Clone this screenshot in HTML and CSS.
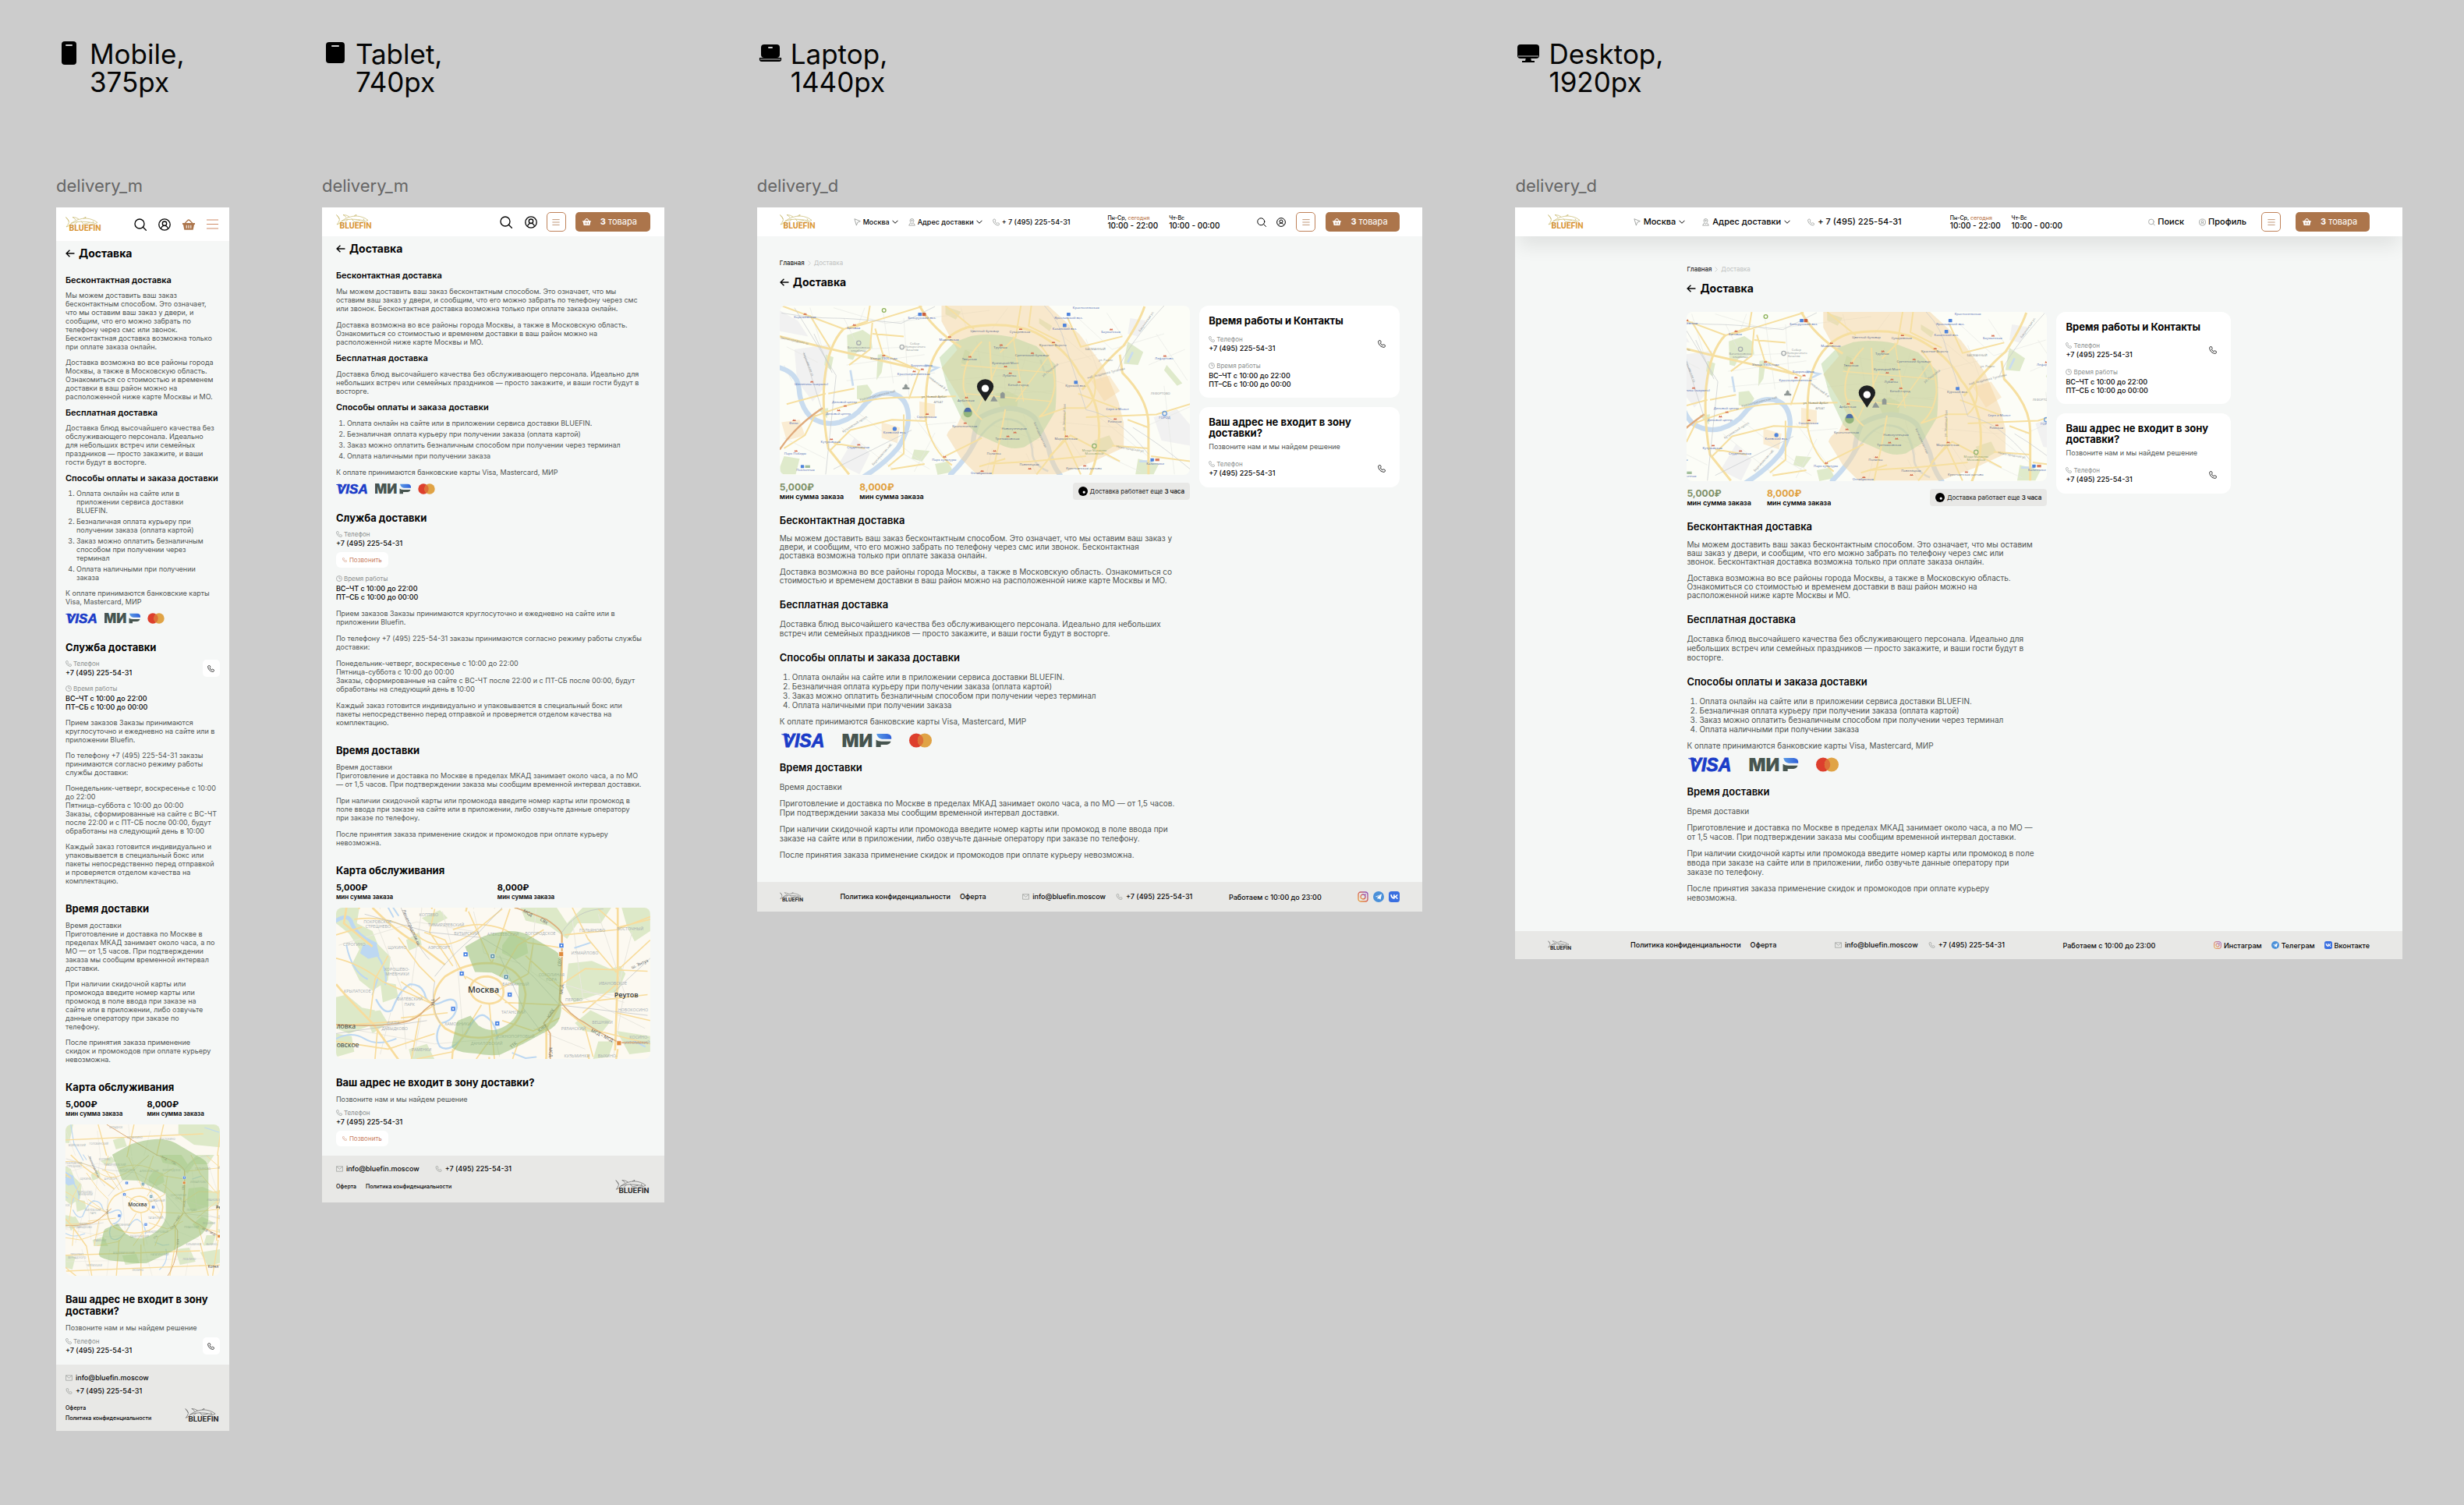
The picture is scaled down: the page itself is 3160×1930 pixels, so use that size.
FILE: index.html
```html
<!DOCTYPE html>
<html lang="ru">
<head>
<meta charset="utf-8">
<title>Bluefin — Доставка</title>
<meta name="viewport" content="width=device-width, initial-scale=1">
<link rel="stylesheet" href="styles.css">
</head>
<body>

<svg class="sprite" width="0" height="0" aria-hidden="true">
  <defs>
    <linearGradient id="gold" x1="0" y1="0" x2="1" y2="1">
      <stop offset="0" stop-color="#c98a2e"/><stop offset=".5" stop-color="#d8912f"/><stop offset="1" stop-color="#e0a640"/>
    </linearGradient>
    <linearGradient id="mir-blue" x1="0" x2="1"><stop offset="0" stop-color="#5a9ae6"/><stop offset="1" stop-color="#2f5fd8"/></linearGradient>
    <linearGradient id="insta" x1="0" y1="1" x2="1" y2="0"><stop offset="0" stop-color="#e9a23b"/><stop offset=".5" stop-color="#d9604f"/><stop offset="1" stop-color="#8a4fc4"/></linearGradient>

  <symbol id="i-search" viewBox="0 0 24 24"><g fill="none" stroke="currentColor" stroke-width="2" stroke-linecap="round"><circle cx="10.500" cy="10.500" r="9"/><path d="M17 17l6 6"/></g></symbol>
  <symbol id="i-user" viewBox="0 0 24 24"><g fill="none" stroke="currentColor" stroke-width="2"><circle cx="12" cy="12" r="10.800"/><circle cx="12" cy="10" r="4"/><path d="M5.500 19c1-3 3.500-5 6.500-5s5.500 2 6.500 5"/></g></symbol>
  <symbol id="i-basket" viewBox="0 0 24 20"><path fill="currentColor" d="M0 7h4l6-6.500q2-1 4 0L20 7h4v3h-1.500l-2 10h-17l-2-10H0zM6.500 7h11L13 2.500q-1-.6-2 0zM7 11v6h1.600v-6zM11.200 11v6h1.600v-6zM15.400 11v6H17v-6z" fill-rule="evenodd"/></symbol>
  <symbol id="i-menu" viewBox="0 0 15 13"><path d="M0 1h15M0 6.500h15M0 12h15" stroke="currentColor" fill="none" stroke-width="1.200"/></symbol>
  <symbol id="i-phone" viewBox="0 0 24 24"><path fill="none" stroke="currentColor" stroke-width="2" stroke-linejoin="round" d="M3 2.500l3.500-1.300q1-.3 1.500.7l2 4q.4 1-.3 1.800L8 9.500c1 3 3.500 5.500 6.500 6.500l1.800-1.700q.8-.7 1.800-.3l4 2q1 .5.7 1.500L21.500 21q-.7 1.500-2.500 1.500C9 21.500 2.500 15 1.500 5q0-1.800 1.500-2.500z"/></symbol>
  <symbol id="i-clock" viewBox="0 0 24 24"><g fill="none" stroke="currentColor" stroke-width="2"><circle cx="12" cy="12" r="10.500"/><path d="M12 5v7h6"/></g></symbol>
  <symbol id="i-back" viewBox="0 0 22 18"><path d="M21 9H2M10 1L2 9l8 8" fill="none" stroke="currentColor" stroke-width="2.600"/></symbol>
  <symbol id="i-chev" viewBox="0 0 16 10"><path d="M1 1.500l7 7 7-7" fill="none" stroke="currentColor" stroke-width="2"/></symbol>
  <symbol id="i-chev-r" viewBox="0 0 8 14"><path d="M1 1l6 6-6 6" fill="none" stroke="currentColor" stroke-width="1.500"/></symbol>
  <symbol id="i-nav" viewBox="0 0 20 22"><path d="M2 1.500l16.500 6.500-8 3.500L7.500 20z" fill="none" stroke="currentColor" stroke-width="1.800" stroke-linejoin="round"/></symbol>
  <symbol id="i-pin" viewBox="0 0 22 24"><g fill="none" stroke="currentColor" stroke-width="1.800"><path d="M11 18S5 11.500 5 7a6 6 0 0 1 12 0c0 4.500-6 11-6 11z"/><circle cx="11" cy="7" r="2"/><path d="M6 14.500L1.500 22h19L16 14.500"/></g></symbol>
  <symbol id="i-mail" viewBox="0 0 24 20"><path d="M1.500 1.500h21v17h-21zM2 2l10 9 10-9" fill="none" stroke="currentColor" stroke-width="1.700"/></symbol>
  <symbol id="i-insta" viewBox="0 0 28 28"><g fill="none" stroke="url(#insta)" stroke-width="2.600"><rect x="2" y="2" width="24" height="24" rx="6"/><circle cx="14" cy="14" r="6"/></g><circle cx="20.500" cy="7.500" r="1.600" fill="#a05ab0"/></symbol>
  <symbol id="i-tg" viewBox="0 0 28 28"><circle cx="14" cy="14" r="14" fill="#4a90d9"/><path d="M5 14l17-7-3 14.500-5-3.500-2.500 2.500-.5-5 8-7-10 6z" fill="#fff"/></symbol>
  <symbol id="i-vk" viewBox="0 0 28 28"><rect width="28" height="28" rx="7" fill="#3a6fe0"/><path d="M4.500 8.500h3.600c.2 4.500 2.200 6.600 4 7V8.500h3.400v4c2-.2 3.800-2 4.500-4h3.300c-.6 2.700-2.400 4.600-3.800 5.500 1.400.8 3.500 2.500 4.300 5.500h-3.600c-.8-2.300-2.600-3.500-4.700-3.800v3.800h-.5C8.500 19.500 4.700 15.500 4.500 8.500z" fill="#fff"/></symbol>

  <symbol id="d-mobile" viewBox="0 0 34 34"><rect x="7" y="2" width="19" height="30" rx="4"/><rect x="12" y="6" width="9" height="2" rx="1" fill="#ccc"/></symbol>
  <symbol id="d-tablet" viewBox="0 0 34 34"><rect x="5" y="3" width="24" height="27" rx="4"/><rect x="12" y="7" width="10" height="2" rx="1" fill="#ccc"/></symbol>
  <symbol id="d-laptop" viewBox="0 0 34 34"><rect x="5" y="6" width="24" height="17" rx="4"/><rect x="14" y="9" width="6" height="2" rx="1" fill="#ccc"/><path d="M3 23q-1 5 3 5h22q4 0 3-5z"/><path d="M4 25h26" stroke="#ccc" stroke-width="1"/></symbol>
  <symbol id="d-desktop" viewBox="0 0 34 34"><rect x="3" y="6" width="28" height="18" rx="4"/><path d="M14 23h6l1 4h4v2H9v-2h4z"/><path d="M4 21h26" stroke="#ccc" stroke-width="1"/></symbol>

  <symbol id="fish" viewBox="0 0 94 38">
    <g fill="none" stroke="currentColor" stroke-width="1.300">
      <path d="M1 1q7 5 8 13Q6 22 2 26q7-1 12-9Q32 4 52 4q18 1 30 11-8 5-20 5"/>
      <path d="M9 12L1 1M26 8q-4-6-8-7 9 0 16 5M46 4l6-4-1 4M14 17q20-9 60-1"/>
      <path d="M30 13l-8 8M40 11l6 8 16-4M70 11l2 4"/>
    </g>
  </symbol>

  <symbol id="pay-visa" viewBox="0 0 41 14"><path d="M0 1h7l2 5Q5 2.500 0 1.500z" fill="#1a3cc8"/><text x="1" y="13.300" font-family="Liberation Sans, sans-serif" font-weight="700" font-style="italic" font-size="17" fill="#1a3cc8" stroke="#1a3cc8" stroke-width=".6">VISA</text></symbol>
  <symbol id="pay-mir" viewBox="0 0 46 14"><text x="-1" y="13.300" font-family="Inter, sans-serif" font-weight="900" font-size="17" fill="#46544f">МИ</text><path d="M32 .8h10q4.500.4 4 5H37q-4-.6-5-5z" fill="url(#mir-blue)"/><path d="M31.500 6.500q2 1.500 5 1.500h9q-1 3-4 3h-5.500v2.300h-4.500z" fill="#46544f"/></symbol>
  <symbol id="pay-mc" viewBox="0 0 22 14"><circle cx="7" cy="7" r="6.700" fill="#dd3f2d"/><circle cx="15" cy="7" r="6.700" fill="#e0a345"/><path d="M11 1.600a6.700 6.700 0 0 1 0 10.800 6.700 6.700 0 0 1 0-10.800z" fill="#dd7038"/></symbol>

  <!-- Central Moscow with the two price zones -->
  <symbol id="moscow" viewBox="3 12 1578 650" preserveAspectRatio="xMidYMid slice">
    <rect x="3" y="12" width="1578" height="650" fill="#fcfdf7"/>
    <g fill="#f1f1f1"><path d="M60 180l140-20-20 160-50 60-60-80zM3 30l70 40 40 60-110-20zM230 620l60-100 60 60-40 80zM1440 440l90-30 50 60v80l-110-20zM1350 60l60 10-30 60-40-10z"/></g>
    <g fill="#faecd2"><path d="M10 460l70-10 20 60-70 20zM395 460l70 20-10 60-60-20zM540 380l60 10v50l-60 10zM1200 300l70-20 40 60-60 40z"/></g>
    <g fill="#dfeacb"><path d="M262 125l60-20 30 20 8 50-60 15-15 30-20-5zM300 320l40-5 20 30-20 35-40-10zM380 200l25-2-10 70-20 30zM20 590l60 10-15 60H5v-30zM1340 150l60 40-20 50-55-5zM1210 530l60-20 20 40-50 30zM520 565l60 5-30 40-40-10zM700 230l15-50 20 10-20 50zM830 350l50-10 40 20-5 45-60 5zM600 620l50-10 20 40-60 12zM1380 600l80 20-20 40h-70zM180 200l30 10-10 50-25-20zM150 410l40-5-5 40zM1490 240l60 70-20 10-50-60zM640 15l60 20-20 30-40-20zM1000 60l50 30-10 20-40-30z"/></g>
    <g stroke="#e7e8e4" stroke-width="2" fill="none">
      <path d="M210 20l200 60 400-50M250 60l60 120 200-10M400 30l40 280M480 60l20 300M560 200l-300 40M260 300l340-30M300 420l260 200M520 440l140 180M560 470l120-10M20 520l160 80M240 480l200 160M120 20l60 200M30 170l120 60M600 500l-80 150M1150 60l130 120 200-60M1180 140l60 160M1260 40l60 90M1230 440l200 160M1420 240l140-60M1450 120l120 180M1400 480l180-80M1260 590l130 60M1480 320l40 340M330 20l-30 80M700 20l20 80M880 20l-60 80M1100 500l100 150M950 580l40 80M820 560l-20 90M640 300l220-20M1060 240l160-40M1080 460l220 20M20 240l30 60M440 560l140 80"/>
      <path d="M720 180l320 60M700 250l340 20M720 310l330 40M760 150l40 220M860 150l10 200M960 170l-60 200M700 360l350-20M820 470l180 60M880 440v110M940 430l40 130M1060 300l100 30M1080 120l120 100"/>
    </g>
    <g fill="none" stroke="#c9dcef" stroke-width="19" stroke-linecap="round">
      <path d="M3 250q70 20 75 85 5 65 45 105 50 35 110 20 60-20 90-60 40-50 90-52 80 0 85 90 0 60-40 120-50 60-130 110"/>
      <path d="M660 660q60-60 85-110 5-70 30-110 50-30 110-34 70 5 100 40 35 70 50 110 15 70 45 105"/>
    </g>
    <path d="M745 560q50-90 110-112 60-5 90 30 30 60 30 110 10 40 60 60M275 260l10 60M560 240l50 10-40 20M1385 610l50 0M1005 220l20 60M1360 190l-20 40" fill="none" stroke="#c9dcef" stroke-width="8"/>
    <path d="M625 12h410l120 110 90 120 60 140 20 80 0 95-120 55-130 48H760l-60-60-55-90q10-30 40-38l30-70-90-150 60-70-60-110z" fill="#f3d3a2" fill-opacity=".5"/>
    <path d="M740 128q70-12 160 5l90 35 72 70q8 90 0 180l-60 100-60 38q-50 12-90-10l-90-40-60-60-52-110-33-125 60-60z" fill="#b5d49c" fill-opacity=".48"/>
    <g fill="none" stroke="#f6dfa0" stroke-linejoin="round">
      <g stroke-width="9"><path d="M250 100q-60 60-75 200-10 130 15 260l80 100M565 455q-5-150 20-220 40-110 140-140 160-25 260 20 120 60 170 160 45 50 70 150 20 130-30 240M540 12q50 90 160 160M1165 335q100-120 160-170 60-90 80-150M1310 200l10 70q100 100 100 200v190M3 130l180 45 330 75"/></g>
      <g stroke-width="6"><path d="M130 440q200-80 350-75l200-5M350 12l-10 60-90 30-240-90M565 455l-130-5-160 40-80 80M565 455q20 110 100 170M640 590l140-70M270 100l100-30 180-55M360 70l-10 110-80 60M640 12l110 90M780 150q-80 80-70 180 20 80 70 120M810 150l10 200M930 12l-20 120-60 60M1080 150l-120-60 10-78M1000 160q60 60 60 160-10 80-60 120M1000 440l100-35h80q50-40 30-120M1180 440l270-10 130-40M1100 420v110l60 130M1040 590l80-80 190 100M1100 520l-110 140M800 620l170-10 210-20M870 410l-20 110-30 140M770 630l100-30M430 640l130-20M480 130l-120-10M1110 60l50 110 160-40M1150 350l160 60M500 370l40-110-140-60M400 200l-30-100M210 540l120 20M20 560l80-50 40-80M180 350l-150 40M290 330l-100 20M200 180l-80-130M1430 590l150 20M1340 450l80 30M1420 560l-140-10M480 430v150l-60 50"/></g>
      <path d="M700 240l350 30M720 350l330 30M760 420l80-180M900 130l40 250M1040 200l-130 180" stroke-width="4"/>
    </g>
    <path d="M3 565q60-90 165-160" fill="none" stroke="#e0ab7c" stroke-width="7"/>
    <g fill="none" stroke="#c5c9cb" stroke-width="2"><path d="M10 40q120 20 200 20t260 20l130-65M95 190l70 220M205 270l-70-150M1020 12q60 60 80 150 40 120 80 250 120 20 240 170M210 640l300-150M1360 480q100 60 220 160M1480 12q-140 150-180 250M60 20l160 260-40 380"/></g>
    <g font-family="Open Sans, sans-serif" font-size="13" fill="#4a67b3" text-anchor="middle">
      <text x="100" y="59">Хорошёвская</text><text x="287" y="101">Беговая</text><text x="550" y="64">Белорусский вкз.</text><text x="654" y="147">Маяковская</text><text x="403" y="218">Улица 1905 года</text><text x="549" y="245">Баррикадная</text><text x="518" y="278">Краснопресненская</text><text x="125" y="318">Шелепиха (закрыто)</text><text x="252" y="386">Деловой центр</text><text x="228" y="430">Деловой центр</text><text x="57" y="466">Фили</text><text x="445" y="502">Киевский вкз.</text><text x="199" y="540">Кутузовская</text><text x="305" y="559">Студенческая</text><text x="63" y="585">Парк Победы</text><text x="102" y="648">Поклонная</text><text x="568" y="443">Смоленская</text><text x="635" y="607">Парк культуры</text><text x="778" y="659">Октябрьская</text><text x="1180" y="24">Красносельская</text><text x="1113" y="62">Ярославский вкз.</text><text x="1098" y="105">Казанский вкз.</text><text x="1275" y="117">Бауманская</text><text x="1480" y="219">Лефортово</text><text x="1301" y="412">Серп и Молот</text><text x="1446" y="622">Калитники</text><text x="1482" y="445">ГОРОД</text>
    </g>
    <g font-family="Open Sans, sans-serif" font-size="13" fill="#586a8c" text-anchor="middle">
      <text x="791" y="115">Цветной бульвар</text><text x="926" y="117">Сухаревская</text><text x="851" y="178">Трубная</text><text x="1053" y="167">Красные Ворота</text><text x="972" y="208">Сретенский бульвар</text><text x="732" y="222">Тверская</text><text x="870" y="236">Кузнецкий Мост</text><text x="886" y="286">Лубянка</text><text x="920" y="321">Китай-город</text><text x="1140" y="325">Курский вкз.</text><text x="719" y="380">Арбатская</text><text x="714" y="478">Кропоткинская</text><text x="904" y="488">Новокузнецкая</text><text x="878" y="528">Третьяковская</text><text x="1103" y="528">Марксистская</text><text x="826" y="585">Полянка</text><text x="962" y="627">Павелецкая</text><text x="1172" y="641">Крестьянская застава</text><text x="1290" y="462">Римская</text>
    </g>
    <g font-family="Open Sans, sans-serif" font-size="12" fill="#8c9296" text-anchor="middle">
      <text x="307" y="177">Ваганьковское</text><text x="307" y="190">кладбище</text><text x="522" y="161">Собор</text><text x="524" y="174">Непорочного</text><text x="512" y="187">Зачатия</text><text x="613" y="386">АРБАТ</text><text x="1216" y="182">БАСМАННЫЙ</text><text x="1466" y="353">ЛЕФОРТОВО</text><text x="596" y="365" fill="#6a7276">ул. Новый Арбат</text><text x="1256" y="224">ул. Радио</text><text x="1212" y="572" fill="#87a06a">Мощи Матроны</text><text x="1212" y="585" fill="#87a06a">Московской</text>
      <text x="382" y="360" transform="rotate(-14 382 360)">Краснопресненская наб.</text><text x="295" y="470" transform="rotate(-32 295 470)">Кутузовский просп.</text><text x="400" y="585" transform="rotate(-48 400 585)">Бережковская наб.</text><text x="110" y="240" transform="rotate(68 110 240)">Хорошёвское ш.</text><text x="60" y="150" transform="rotate(12 60 150)">Звенигородское ш.</text><text x="1258" y="275" transform="rotate(-14 1258 275)">наб. Академика Туполева</text><text x="1350" y="566" transform="rotate(10 1350 566)">Нижегородская ул.</text><text x="1415" y="75" transform="rotate(-55 1415 75)">Бакунинская ул.</text><text x="1000" y="510" transform="rotate(66 1000 510)">Космодамианская</text><text x="1100" y="440" transform="rotate(-88 1100 440)">ул. Земляной Вал</text><text x="610" y="315" transform="rotate(36 610 315)">Новинский б-р</text><text x="1045" y="262" transform="rotate(-38 1045 262)">ул. Покровка</text>
    </g>
    <g fill="#d4694a"><path d="M94 47l4-7 3 4 3-4 4 7zM283 89l4-7 3 4 3-4 4 7zM649 135l4-7 3 4 3-4 4 7zM396 207l4-7 3 4 3-4 4 7zM544 259l4-7 3 4 3-4 4 7zM513 267l4-7 3 4 3-4 4 7zM120 307l4-7 3 4 3-4 4 7zM248 400l4-7 3 4 3-4 4 7zM223 417l4-7 3 4 3-4 4 7zM52 455l4-7 3 4 3-4 4 7zM195 528l4-7 3 4 3-4 4 7zM300 549l4-7 3 4 3-4 4 7zM59 573l4-7 3 4 3-4 4 7zM563 431l4-7 3 4 3-4 4 7zM630 595l4-7 3 4 3-4 4 7zM774 650l4-7 3 4 3-4 4 7zM922 105l4-7 3 4 3-4 4 7zM847 166l4-7 3 4 3-4 4 7zM1048 156l4-7 3 4 3-4 4 7zM967 197l4-7 3 4 3-4 4 7zM727 211l4-7 3 4 3-4 4 7zM864 249l4-7 3 4 3-4 4 7zM882 274l4-7 3 4 3-4 4 7zM916 308l4-7 3 4 3-4 4 7zM714 368l4-7 3 4 3-4 4 7zM709 466l4-7 3 4 3-4 4 7zM900 502l4-7 3 4 3-4 4 7zM873 517l4-7 3 4 3-4 4 7zM1098 516l4-7 3 4 3-4 4 7zM822 573l4-7 3 4 3-4 4 7zM957 641l4-7 3 4 3-4 4 7zM1168 630l4-7 3 4 3-4 4 7zM1285 450l4-7 3 4 3-4 4 7zM1270 106l4-7 3 4 3-4 4 7zM1476 208l4-7 3 4 3-4 4 7z"/></g>
    <g fill="#4f84dc"><rect x="535" y="39" width="14" height="13" rx="2"/><rect x="1106" y="39" width="14" height="13" rx="2"/><rect x="1091" y="81" width="14" height="13" rx="2"/><rect x="1134" y="300" width="14" height="13" rx="2"/><rect x="84" y="624" width="13" height="12" rx="2"/><rect x="1428" y="598" width="13" height="12" rx="2"/><circle cx="445" cy="485" r="8"/></g>
    <rect x="551" y="39" width="14" height="13" rx="2" fill="#c9603f"/><rect x="1446" y="599" width="16" height="10" fill="#d77a5c"/><rect x="101" y="625" width="19" height="10" fill="#a3bf9c"/>
    <g fill="none" stroke-width="4"><circle cx="404" cy="30" r="7" stroke="#8fb35b"/><circle cx="307" cy="155" r="8" stroke="#a8adaf"/><circle cx="473" cy="171" r="8" stroke="#a8adaf"/><circle cx="1482" cy="426" r="8" stroke="#6fa0dc"/><circle cx="1212" cy="551" r="8" stroke="#93b573"/></g>
    <circle cx="726" cy="424" r="17" fill="#93b57c"/><path d="M712 420q2-16 14-16t14 16z" fill="#4c6ca6"/>
    <path d="M475 333h27v-6l-8-3v-6l-6-6-6 6v6l-7 3zM813 380h28l-9-14-6-8-6 8zM851 368h17v-18l-8-7-9 7z" fill="#8f9794"/>
    <path d="M793 380l-22-34q-10-12-10-24a32 28 0 0 1 64 0q0 12-10 24z" fill="#1e2022"/><circle cx="793" cy="330" r="14" fill="#fff"/>
  </symbol>

  <!-- City-wide base map -->
  <g id="city">
    <rect x="0" y="-60" width="1400" height="1060" fill="#fcf9f1"/>
    <g fill="#dde9c8">
      <path d="M90 155l90 0-10 60 60 30 20 50 50 50-10 90-60 40-50-40-30-60 30-60-40-60-50-40zM90 500l40-10 60 50 50 10-20 60-80 30-50-20zM260 440l60 10 10 50-60 20zM985 370l90-10 70 30 40-10 20 30-30 70-80 10-90 30-30-60zM800 155l140 0 40 60 60-60h110l-40 60-90 0-40 60-70-50-90-20zM1190 155h110v90l-60 40-30-60zM1010 600l60-50 80 40-40 50-70-10zM360 280l50-30 10 50-50 20zM420 195l70-30 30 30-60 30zM730 300l30-40 60 10 10 60-50 25-50-25zM90 640l60 10 10 60-70 20zM200 560l60-10 30 50-60 40zM1170 630l130 20v60l-80 10zM370 700l70-20 30 60h-90zM1100 670l60 0-20 60-60 8zM920 -60h300l60 80-60 90-200-20-100-70zM160 -60h90l-30 140-80-10zM500 60l70-20 20 60-70 20zM900 760l90-10 40 90-100 20zM1060 780l130-20 20 80-100 30zM560 800l90-10 20 60-90 10zM180 790l80 20-20 80-70-20z"/>
    </g>
    <g fill="none" stroke="#e9e7df" stroke-width="3">
      <path d="M100 300l300-90 240 40M240 200l100 260 20 240M420 160l-40 300M500 170l60 230 20 260M620 170l40 160 140 40M860 160l-20 240 120 80M1000 200l40 300 240 120M1100 180l100 300-40 240M1230 250l-60 240M900 430l300 90M130 620l340 60 230-20M300 560l-40 160M420 560l-30 170M850 620l200 80M1040 480l200 20M700 640l20 90M200 0l60 160M400 0l20 160M600-40l20 200M740 0l-40 160M300 760l60 200M480 760l-20 180M700 740l60 220M1000 740l-40 220M200 840l900-20M260 60l700-40"/>
    </g>
    <g fill="none" stroke="#bdd8f2" stroke-linecap="round" stroke-linejoin="round">
      <path d="M90 205q50-30 60 10 20 50 90 80" stroke-width="15"/>
      <path d="M195 300l50 0 10 40-40 10-30-20z" fill="#bdd8f2" stroke-width="4"/>
      <path d="M250 340q40 60 30 110M245 510q30 60 60 40 30-80 70-100 50 0 60 50 20 40 60 20 60-30 60 20-10 50-60 60-30 50-5 90 40 30 100-50 40-80 70-70 50 30 50 90" stroke-width="7"/>
      <path d="M130 300q20 100 80 130M250 430l-20 60M310 155l20 30M770 715l50 20 40-5M90 660q60-30 110 0t120 0M1010 310l60-20M1240 670l40 20M230-40l20 120 60 110M1090-20l90 30M840 760q20 80-40 130" stroke-width="6"/>
    </g>
    <g fill="none" stroke="#f8dc9c" stroke-linejoin="round">
      <g stroke-width="8"><path d="M470 560q-20-80 40-140 90-60 190-50 110 20 120 120-10 110-90 150-120 40-220-20-30-30-40-60zM605 470q10-50 70-50 60 10 60 60 0 40-55 45-65-5-75-55zM130 155l-10 60 110 90M960 260v180l-10 90-50 90v118M1175 155v250l-10 300M230 155q90 90 160 130l120 90M90 450q50 60 140 150l100 140"/></g>
      <g stroke-width="5"><path d="M160 200q150-20 240 60t220-10l110-90M90 350q90 20 180 90l200 90M290 340l-50 90-20 150M330 270l80 110 60 60M430 250l80 30 80 150M540 240q100-40 200 0l90 50 130 20M600 170l90 200M760 160l-70 210M850 290l-20 120-110 60M820 340l130 120M740 520l210 10 340-40M730 590l120 40 100-50M700 640l-70 98M600 620l-60 90-140 28M470 640l-180 60-200-30M340 440l130 90-100 60-280 20M680 525l20 213M800 560l-100-80-110-60M960 450l90-60 240 10M970 260l200-20 130-50M960 540l100 80 240 60M1170 400l130-120M1170 405l-110-130-60-120M1040 560l130-110M1100 160l80 70 120-30M900 620l-110 60-20 58M540 380l-90-130 20-90M410 580l-30 158M520 560l-180 20M250 620l-10 118M650 530l-50 80M720 420l70-120 100-60M1050 620l30 110M1170 560l130 30M90 260l100-30"/></g>
      <path d="M100-60l80 220M460 160l-60-220M640-60l-50 230M830-60l-50 220M1200-60l-30 220M1175 700l-40 260M330 738l40 220M540 700l-20 260M680 730v230M900 730l-40 230M1060 720l60 240M160 800l900-30M200 900l1000-40M180 60l900-40M0 720l300 240" stroke-width="7"/>
    </g>
    <path d="M90 605q150 10 240-5 70-10 100-50l60-50M780 155q60 20 120 45 60 40 60 60v90l-10 160q40 60 100 90 60 40 130 75h110M950 530l-60 70 25 40v98M780 155L640 70 460-40M915 738q-10 120-80 220" fill="none" stroke="#dcae7c" stroke-width="5"/>
    <g fill="none" stroke="#b9bdbf" stroke-width="2"><path d="M340 155q60 150 110 200M470 420q60-80 170-170l90-95M200 180l250 70 200 20 100 60 100 90 100 110 340 40M470 440q-20 90 20 160M90 640l350-50M960 250q60-90 160-90M1160 480l140-130M720 340l90 200 60 80"/></g>
    <g font-family="Open Sans, sans-serif" font-size="16" fill="#a5adb1" text-anchor="middle">
      <text x="447" y="188">КОПТЕВО</text><text x="252" y="214">ПОКРОВСКОЕ-</text><text x="252" y="234">СТРЕШНЕВО</text><text x="514" y="226">ТИМИРЯЗЕВСКИЙ</text><text x="592" y="259">БУТЫРСКИЙ</text><text x="733" y="263">АЛЕКСЕЕВСКИЙ</text><text x="877" y="259">БОГОРОДСКОЕ</text><text x="1077" y="248">ГОЛЬЯНОВО</text><text x="1223" y="243">ВОСТОЧНЫЙ</text><text x="160" y="302">СТРОГИНО</text><text x="325" y="315">ЩУКИНО</text><text x="487" y="313">АЭРОПОРТ</text><text x="1048" y="336">ИЗМАЙЛОВО</text><text x="324" y="398">ХОРОШЁВО-</text><text x="326" y="417">МНЁВНИКИ</text><text x="920" y="419">СОКОЛИНАЯ</text><text x="920" y="438">ГОРА</text><text x="1156" y="452">ИВАНОВСКОЕ</text><text x="782" y="455">БАСМАННЫЙ</text><text x="172" y="484">КРЫЛАТСКОЕ</text><text x="373" y="514">ФИЛЁВСКИЙ</text><text x="373" y="533">ПАРК</text><text x="1006" y="515">ПЕРОВО</text><text x="1234" y="555">НОВОКОСИНО</text><text x="773" y="564">ТАГАНСКИЙ</text><text x="312" y="607">ФИЛИ-</text><text x="316" y="627">ДАВЫДКОВО</text><text x="559" y="608">ХАМОВНИКИ</text><text x="1116" y="602">ВЕШНЯКИ</text><text x="1005" y="627">РЯЗАНСКИЙ</text><text x="782" y="656">ЮЖНОПОРТОВЫЙ</text><text x="670" y="684">ДАНИЛОВСКИЙ</text><text x="419" y="708">РАМЕНКИ</text><text x="1257" y="661">КОСИНО-</text><text x="1250" y="681">УХТОМСКИЙ</text><text x="1018" y="733">КУЗЬМИНКИ</text><text x="1136" y="733">ВЫХИНО-</text>
      <text x="520" y="-16">ОТРАДНОЕ</text><text x="410" y="90">ГОЛОВИНСКИЙ</text><text x="270" y="100">ВОЙКОВСКИЙ</text><text x="640" y="50">ОСТАНКИНО</text><text x="850" y="60">РОСТОКИНО</text><text x="270" y="800">ПРОСПЕКТ</text><text x="270" y="818">ВЕРНАДСКОГО</text><text x="570" y="790">АКАДЕМИЧЕСКИЙ</text><text x="800" y="800">НАГАТИНСКИЙ</text><text x="990" y="830">ЛЮБЛИНО</text><text x="660" y="900">ЗЮЗИНО</text><text x="380" y="870">ЧЕРЁМУШКИ</text>
    </g>
    <g font-family="Open Sans, sans-serif" font-size="17" fill="#5b6064" text-anchor="middle">
      <text x="375" y="235" transform="rotate(66 375 235)">Ленинградское ш.</text><text x="826" y="180" transform="rotate(30 826 180)">МСД</text><text x="888" y="212" transform="rotate(34 888 212)">СВХ</text><text x="957" y="366" transform="rotate(-88 957 366)">СВХ</text><text x="964" y="470" transform="rotate(-88 964 470)">МСД</text><text x="922" y="565" transform="rotate(-60 922 565)">ЮВХ</text><text x="888" y="623" transform="rotate(-36 888 623)">ЮВХ</text><text x="777" y="688" transform="rotate(-40 777 688)">ТТК</text><text x="456" y="520" transform="rotate(88 456 520)">ТТК</text><text x="1112" y="652" transform="rotate(26 1112 652)">МСД – МСД</text><text x="911" y="712" transform="rotate(88 911 712)">МСД</text><text x="1262" y="377" transform="rotate(-24 1262 377)">ш. Энтуз</text>
    </g>
    <g font-family="Open Sans, sans-serif" fill="#34393c" font-size="26"><text x="92" y="622">ловка</text><text x="92" y="692">овское</text><text x="1110" y="880" font-size="24">Котел</text></g>
  </g>

  <path id="zone" d="M587 305l73-40q50-18 100-20 40 0 70 15l105 62q20 12 22 40v190q-4 50-40 70l-107 58-90 42q-50 4-90-5-60-2-88-18-8-6-6-15l18-85q4-10 14-12l40-16 30 38q28 18 52 18t50-15q48-30 53-72v-85l-53-25-50-25-65-2q-20-50-38-98z" fill="#93be74" fill-opacity=".54"/>

  <g id="places">
    <text x="658" y="483" font-family="Open Sans, sans-serif" font-weight="600" font-size="32" fill="#34393c" text-anchor="middle">Москва</text>
    <text x="1208" y="501" font-family="Open Sans, sans-serif" font-weight="600" font-size="27" fill="#34393c" text-anchor="middle">Реутов</text>
    <g stroke="#fff" stroke-width="2" fill="#3f7be0"><path d="M580 326h18v18h-18zM565 400h18v18h-18zM750 481h18v18h-18zM532 536h18v18h-18zM702 592h18v18h-18zM949 292h18v18h-18z"/><path fill="#5e93a4" d="M684 333h18v18h-18zM736 413h18v18h-18z"/><path fill="#e08a3c" d="M948 325h18v18h-18zM1171 668h18v18h-18z"/></g>
    <path d="M586 332h6v6h-6zM571 406h6v6h-6zM756 487h6v6h-6zM538 542h6v6h-6zM708 598h6v6h-6zM955 298h6v6h-6zM690 339h6v6h-6zM742 419h6v6h-6z" fill="#fff"/>
  </g>
  </defs>
</svg>

<main class="board">

  <!-- Mobile -->
  <section class="board__col">
    <h2 class="device"><svg class="device__icon" aria-hidden="true"><use href="#d-mobile"/></svg><span>Mobile,<br>375px</span></h2>
    <p class="frame-name">delivery_m</p>
    <article class="frame frame--mobile">
      <header class="top">
        <a class="logo" href="#" aria-label="Bluefin"><svg viewBox="0 0 94 38"><use href="#fish" color="#c3b25e"/><text class="logo__text" x="9" y="36" fill="url(#gold)">BLUEFIN</text></svg></a>
        <nav class="tools">
          <button class="tool" aria-label="Поиск"><svg><use href="#i-search"/></svg></button>
          <button class="tool" aria-label="Профиль"><svg><use href="#i-user"/></svg></button>
          <button class="tool tool--brown" aria-label="Корзина"><svg><use href="#i-basket"/></svg></button>
          <button class="tool tool--menu" aria-label="Меню"><svg><use href="#i-menu"/></svg></button>
        </nav>
      </header>
      <div class="doc">
        <h1 class="title"><a href="#" aria-label="Назад"><svg><use href="#i-back"/></svg></a>Доставка</h1>
        <h3>Бесконтактная доставка</h3>
        <p>Мы можем доставить ваш заказ<br>бесконтактным способом. Это означает,<br>что мы оставим ваш заказ у двери, и<br>сообщим, что его можно забрать по<br>телефону через смс или звонок.<br>Бесконтактная доставка возможна только<br>при оплате заказа онлайн.</p>
        <p>Доставка возможна во все районы города<br>Москвы, а также в Московскую область.<br>Ознакомиться со стоимостью и временем<br>доставки в ваш район можно на<br>расположенной ниже карте Москвы и МО.</p>
        <h3>Бесплатная доставка</h3>
        <p>Доставка блюд высочайшего качества без<br>обслуживающего персонала. Идеально<br>для небольших встреч или семейных<br>праздников — просто закажите, и ваши<br>гости будут в восторге.</p>
        <h3>Способы оплаты и заказа доставки</h3>
        <ol>
          <li>Оплата онлайн на сайте или в<br>приложении сервиса доставки<br>BLUEFIN.</li>
          <li>Безналичная оплата курьеру при<br>получении заказа (оплата картой)</li>
          <li>Заказ можно оплатить безналичным<br>способом при получении через<br>терминал</li>
          <li>Оплата наличными при получении<br>заказа</li>
        </ol>
        <p>К оплате принимаются банковские карты<br>Visa, Mastercard, МИР</p>
        <div class="pay"><svg class="pay__visa"><use href="#pay-visa"/></svg><svg class="pay__mir"><use href="#pay-mir"/></svg><svg class="pay__mc"><use href="#pay-mc"/></svg></div>

        <h2>Служба доставки</h2>
        <div class="contact">
          <div><span class="hint"><svg><use href="#i-phone"/></svg>Телефон</span><a class="value" href="tel:+74952255431">+7 (495) 225-54-31</a></div>
          <button class="call-square" aria-label="Позвонить"><svg><use href="#i-phone"/></svg></button>
        </div>
        <div class="hours"><span class="hint"><svg><use href="#i-clock"/></svg>Время работы</span><span class="value value--lines">ВС–ЧТ с 10:00 до 22:00<br>ПТ–СБ с 10:00 до 00:00</span></div>
        <p>Прием заказов Заказы принимаются<br>круглосуточно и ежедневно на сайте или в<br>приложении Bluefin.</p>
        <p>По телефону +7 (495) 225-54-31 заказы<br>принимаются согласно режиму работы<br>службы доставки:</p>
        <p>Понедельник-четверг, воскресенье с 10:00<br>до 22:00<br>Пятница-суббота с 10:00 до 00:00<br>Заказы, сформированные на сайте с ВС-ЧТ<br>после 22:00 и с ПТ-СБ после 00:00, будут<br>обработаны на следующий день в 10:00</p>
        <p>Каждый заказ готовится индивидуально и<br>упаковывается в специальный бокс или<br>пакеты непосредственно перед отправкой<br>и проверяется отделом качества на<br>комплектацию.</p>

        <h2>Время доставки</h2>
        <p>Время доставки<br>Приготовление и доставка по Москве в<br>пределах МКАД занимает около часа, а по<br>МО — от 1,5 часов. При подтверждении<br>заказа мы сообщим временной интервал<br>доставки.</p>
        <p>При наличии скидочной карты или<br>промокода введите номер карты или<br>промокод в поле ввода при заказе на<br>сайте или в приложении, либо озвучьте<br>данные оператору при заказе по<br>телефону.</p>
        <p>После принятия заказа применение<br>скидок и промокодов при оплате курьеру<br>невозможна.</p>

        <h2>Карта обслуживания</h2>
        <div class="prices prices--half"><div><b>5,000₽</b><span>мин сумма заказа</span></div><div><b>8,000₽</b><span>мин сумма заказа</span></div></div>
        <svg class="map map--zone" viewBox="0 0 594 582" preserveAspectRatio="xMidYMid slice" role="img" aria-label="Карта обслуживания"><g transform="scale(.6) translate(-196 40)"><use href="#city"/></g><use href="#zone" transform="translate(-407 -189)"/><g transform="scale(.6) translate(-196 40)"><use href="#places"/></g></svg>

        <h2>Ваш адрес не входит в зону<br>доставки?</h2>
        <p>Позвоните нам и мы найдем решение</p>
        <div class="contact contact--tight">
          <div><span class="hint"><svg><use href="#i-phone"/></svg>Телефон</span><a class="value" href="tel:+74952255431">+7 (495) 225-54-31</a></div>
          <button class="call-square" aria-label="Позвонить"><svg><use href="#i-phone"/></svg></button>
        </div>
      </div>
      <footer class="foot">
        <div class="foot__contacts"><a href="mailto:info@bluefin.moscow"><svg><use href="#i-mail"/></svg>info@bluefin.moscow</a><a href="tel:+74952255431"><svg><use href="#i-phone"/></svg>+7 (495) 225-54-31</a></div>
        <div class="foot__row">
          <div class="foot__legal"><a href="#">Оферта</a><a href="#">Политика конфиденциальности</a></div>
          <a class="logo" href="#" aria-label="Bluefin"><svg viewBox="0 0 94 38"><use href="#fish" color="#555"/><text class="logo__text" x="9" y="36" fill="#2b2b2b">BLUEFIN</text></svg></a>
        </div>
      </footer>
    </article>
  </section>

  <!-- Tablet -->
  <section class="board__col">
    <h2 class="device"><svg class="device__icon" aria-hidden="true"><use href="#d-tablet"/></svg><span>Tablet,<br>740px</span></h2>
    <p class="frame-name">delivery_m</p>
    <article class="frame frame--tablet">
      <header class="top">
        <a class="logo" href="#" aria-label="Bluefin"><svg viewBox="0 0 94 38"><use href="#fish" color="#c3b25e"/><text class="logo__text" x="9" y="36" fill="url(#gold)">BLUEFIN</text></svg></a>
        <nav class="tools">
          <button class="tool" aria-label="Поиск"><svg><use href="#i-search"/></svg></button>
          <button class="tool" aria-label="Профиль"><svg><use href="#i-user"/></svg></button>
          <button class="menu-btn" aria-label="Меню"><svg><use href="#i-menu"/></svg></button>
          <button class="cart"><svg><use href="#i-basket"/></svg><span><b>3</b> товара</span></button>
        </nav>
      </header>
      <div class="doc">
        <h1 class="title"><a href="#" aria-label="Назад"><svg><use href="#i-back"/></svg></a>Доставка</h1>
        <h3>Бесконтактная доставка</h3>
        <p>Мы можем доставить ваш заказ бесконтактным способом. Это означает, что мы<br>оставим ваш заказ у двери, и сообщим, что его можно забрать по телефону через смс<br>или звонок. Бесконтактная доставка возможна только при оплате заказа онлайн.</p>
        <p>Доставка возможна во все районы города Москвы, а также в Московскую область.<br>Ознакомиться со стоимостью и временем доставки в ваш район можно на<br>расположенной ниже карте Москвы и МО.</p>
        <h3>Бесплатная доставка</h3>
        <p>Доставка блюд высочайшего качества без обслуживающего персонала. Идеально для<br>небольших встреч или семейных праздников — просто закажите, и ваши гости будут в<br>восторге.</p>
        <h3>Способы оплаты и заказа доставки</h3>
        <ol>
          <li>Оплата онлайн на сайте или в приложении сервиса доставки BLUEFIN.</li>
          <li>Безналичная оплата курьеру при получении заказа (оплата картой)</li>
          <li>Заказ можно оплатить безналичным способом при получении через терминал</li>
          <li>Оплата наличными при получении заказа</li>
        </ol>
        <p>К оплате принимаются банковские карты Visa, Mastercard, МИР</p>
        <div class="pay"><svg class="pay__visa"><use href="#pay-visa"/></svg><svg class="pay__mir"><use href="#pay-mir"/></svg><svg class="pay__mc"><use href="#pay-mc"/></svg></div>

        <h2>Служба доставки</h2>
        <div class="contact"><div><span class="hint"><svg><use href="#i-phone"/></svg>Телефон</span><a class="value" href="tel:+74952255431">+7 (495) 225-54-31</a></div></div>
        <button class="call"><svg><use href="#i-phone"/></svg>Позвонить</button>
        <div class="hours"><span class="hint"><svg><use href="#i-clock"/></svg>Время работы</span><span class="value value--lines">ВС–ЧТ с 10:00 до 22:00<br>ПТ–СБ с 10:00 до 00:00</span></div>
        <p>Прием заказов Заказы принимаются круглосуточно и ежедневно на сайте или в<br>приложении Bluefin.</p>
        <p>По телефону +7 (495) 225-54-31 заказы принимаются согласно режиму работы службы<br>доставки:</p>
        <p>Понедельник-четверг, воскресенье с 10:00 до 22:00<br>Пятница-суббота с 10:00 до 00:00<br>Заказы, сформированные на сайте с ВС-ЧТ после 22:00 и с ПТ-СБ после 00:00, будут<br>обработаны на следующий день в 10:00</p>
        <p>Каждый заказ готовится индивидуально и упаковывается в специальный бокс или<br>пакеты непосредственно перед отправкой и проверяется отделом качества на<br>комплектацию.</p>

        <h2>Время доставки</h2>
        <p>Время доставки<br>Приготовление и доставка по Москве в пределах МКАД занимает около часа, а по МО<br>— от 1,5 часов. При подтверждении заказа мы сообщим временной интервал доставки.</p>
        <p>При наличии скидочной карты или промокода введите номер карты или промокод в<br>поле ввода при заказе на сайте или в приложении, либо озвучьте данные оператору<br>при заказе по телефону.</p>
        <p>После принятия заказа применение скидок и промокодов при оплате курьеру<br>невозможна.</p>

        <h2>Карта обслуживания</h2>
        <div class="prices prices--half"><div><b>5,000₽</b><span>мин сумма заказа</span></div><div><b>8,000₽</b><span>мин сумма заказа</span></div></div>
        <svg class="map map--zone" viewBox="90 155 1210 583" preserveAspectRatio="xMidYMid slice" role="img" aria-label="Карта обслуживания"><use href="#city"/><use href="#zone"/><use href="#places"/></svg>

        <h2>Ваш адрес не входит в зону доставки?</h2>
        <p>Позвоните нам и мы найдем решение</p>
        <div class="contact contact--tight"><div><span class="hint"><svg><use href="#i-phone"/></svg>Телефон</span><a class="value" href="tel:+74952255431">+7 (495) 225-54-31</a></div></div>
        <button class="call"><svg><use href="#i-phone"/></svg>Позвонить</button>
      </div>
      <footer class="foot">
        <div class="foot__contacts"><a href="mailto:info@bluefin.moscow"><svg><use href="#i-mail"/></svg>info@bluefin.moscow</a><a href="tel:+74952255431"><svg><use href="#i-phone"/></svg>+7 (495) 225-54-31</a></div>
        <div class="foot__row">
          <div class="foot__legal"><a href="#">Оферта</a><a href="#">Политика конфиденциальности</a></div>
          <a class="logo" href="#" aria-label="Bluefin"><svg viewBox="0 0 94 38"><use href="#fish" color="#555"/><text class="logo__text" x="9" y="36" fill="#2b2b2b">BLUEFIN</text></svg></a>
        </div>
      </footer>
    </article>
  </section>

  <!-- Laptop -->
  <section class="board__col">
    <h2 class="device"><svg class="device__icon" aria-hidden="true"><use href="#d-laptop"/></svg><span>Laptop,<br>1440px</span></h2>
    <p class="frame-name">delivery_d</p>
    <article class="frame frame--wide frame--laptop">
      <header class="top">
        <a class="logo" href="#" aria-label="Bluefin"><svg viewBox="0 0 94 38"><use href="#fish" color="#c3b25e"/><text class="logo__text" x="9" y="36" fill="url(#gold)">BLUEFIN</text></svg></a>
        <nav class="where">
          <button><svg class="ico"><use href="#i-nav"/></svg>Москва<svg class="chev"><use href="#i-chev"/></svg></button>
          <button><svg class="ico"><use href="#i-pin"/></svg>Адрес доставки<svg class="chev"><use href="#i-chev"/></svg></button>
          <a href="tel:+74952255431"><svg class="ico"><use href="#i-phone"/></svg>+ 7 (495) 225-54-31</a>
        </nav>
        <div class="week"><div><small>Пн-Ср, <em>сегодня</em></small>10:00 - 22:00</div><div><small>Чт-Вс</small>10:00 - 00:00</div></div>
        <nav class="tools">
          <button class="tool" aria-label="Поиск"><svg><use href="#i-search"/></svg></button>
          <button class="tool" aria-label="Профиль"><svg><use href="#i-user"/></svg></button>
          <button class="menu-btn" aria-label="Меню"><svg><use href="#i-menu"/></svg></button>
          <button class="cart"><svg><use href="#i-basket"/></svg><span><b>3</b> товара</span></button>
        </nav>
      </header>
      <div class="page">
        <nav class="crumbs"><a href="#">Главная</a><svg><use href="#i-chev-r"/></svg><span>Доставка</span></nav>
        <h1 class="title"><a href="#" aria-label="Назад"><svg><use href="#i-back"/></svg></a>Доставка</h1>
        <div class="cols">
          <div class="doc">
            <svg class="map" role="img" aria-label="Карта зон доставки"><use href="#moscow" width="100%" height="100%"/></svg>
            <div class="under">
              <div class="prices"><div class="green"><b>5,000₽</b><span>мин сумма заказа</span></div><div class="amber"><b>8,000₽</b><span>мин сумма заказа</span></div></div>
              <p class="badge"><i></i><span>Доставка работает еще <b>3 часа</b></span></p>
            </div>
            <h2>Бесконтактная доставка</h2>
            <p class="dense">Мы можем доставить ваш заказ бесконтактным способом. Это означает, что мы оставим ваш заказ у<br>двери, и сообщим, что его можно забрать по телефону через смс или звонок. Бесконтактная<br>доставка возможна только при оплате заказа онлайн.</p>
            <p class="dense">Доставка возможна во все районы города Москвы, а также в Московскую область. Ознакомиться со<br>стоимостью и временем доставки в ваш район можно на расположенной ниже карте Москвы и МО.</p>
            <h2>Бесплатная доставка</h2>
            <p>Доставка блюд высочайшего качества без обслуживающего персонала. Идеально для небольших<br>встреч или семейных праздников — просто закажите, и ваши гости будут в восторге.</p>
            <h2>Способы оплаты и заказа доставки</h2>
            <ol>
              <li>Оплата онлайн на сайте или в приложении сервиса доставки BLUEFIN.</li>
              <li>Безналичная оплата курьеру при получении заказа (оплата картой)</li>
              <li>Заказ можно оплатить безналичным способом при получении через терминал</li>
              <li>Оплата наличными при получении заказа</li>
            </ol>
            <p>К оплате принимаются банковские карты Visa, Mastercard, МИР</p>
            <div class="pay"><svg class="pay__visa"><use href="#pay-visa"/></svg><svg class="pay__mir"><use href="#pay-mir"/></svg><svg class="pay__mc"><use href="#pay-mc"/></svg></div>
            <h2>Время доставки</h2>
            <p>Время доставки</p>
            <p>Приготовление и доставка по Москве в пределах МКАД занимает около часа, а по МО — от 1,5 часов.<br>При подтверждении заказа мы сообщим временной интервал доставки.</p>
            <p>При наличии скидочной карты или промокода введите номер карты или промокод в поле ввода при<br>заказе на сайте или в приложении, либо озвучьте данные оператору при заказе по телефону.</p>
            <p>После принятия заказа применение скидок и промокодов при оплате курьеру невозможна.</p>
          </div>
          <aside class="cards">
            <section class="card">
              <h2>Время работы и Контакты</h2>
              <div class="contact"><div><span class="hint"><svg><use href="#i-phone"/></svg>Телефон</span><a class="value" href="tel:+74952255431">+7 (495) 225-54-31</a></div><button class="call-plain" aria-label="Позвонить"><svg><use href="#i-phone"/></svg></button></div>
              <div class="hours"><span class="hint"><svg><use href="#i-clock"/></svg>Время работы</span><span class="value value--lines">ВС–ЧТ с 10:00 до 22:00<br>ПТ–СБ с 10:00 до 00:00</span></div>
            </section>
            <section class="card">
              <h2>Ваш адрес не входит в зону<br>доставки?</h2>
              <p>Позвоните нам и мы найдем решение</p>
              <div class="contact"><div><span class="hint"><svg><use href="#i-phone"/></svg>Телефон</span><a class="value" href="tel:+74952255431">+7 (495) 225-54-31</a></div><button class="call-plain" aria-label="Позвонить"><svg><use href="#i-phone"/></svg></button></div>
            </section>
          </aside>
        </div>
      </div>
      <footer class="foot">
        <a class="logo" href="#" aria-label="Bluefin"><svg viewBox="0 0 94 38"><use href="#fish" color="#555"/><text class="logo__text" x="9" y="36" fill="#2b2b2b">BLUEFIN</text></svg></a>
        <div class="foot__legal"><a href="#">Политика конфиденциальности</a><a href="#">Оферта</a></div>
        <div class="foot__contacts"><a href="mailto:info@bluefin.moscow"><svg><use href="#i-mail"/></svg>info@bluefin.moscow</a><a href="tel:+74952255431"><svg><use href="#i-phone"/></svg>+7 (495) 225-54-31</a></div>
        <span>Работаем с 10:00 до 23:00</span>
        <div class="social"><a href="#" aria-label="Инстаграм"><svg><use href="#i-insta"/></svg></a><a href="#" aria-label="Телеграм"><svg><use href="#i-tg"/></svg></a><a href="#" aria-label="Вконтакте"><svg><use href="#i-vk"/></svg></a></div>
      </footer>
    </article>
  </section>

  <!-- Desktop -->
  <section class="board__col">
    <h2 class="device"><svg class="device__icon" aria-hidden="true"><use href="#d-desktop"/></svg><span>Desktop,<br>1920px</span></h2>
    <p class="frame-name">delivery_d</p>
    <article class="frame frame--wide frame--desktop">
      <header class="top">
        <a class="logo" href="#" aria-label="Bluefin"><svg viewBox="0 0 94 38"><use href="#fish" color="#c3b25e"/><text class="logo__text" x="9" y="36" fill="url(#gold)">BLUEFIN</text></svg></a>
        <nav class="where">
          <button><svg class="ico"><use href="#i-nav"/></svg>Москва<svg class="chev"><use href="#i-chev"/></svg></button>
          <button><svg class="ico"><use href="#i-pin"/></svg>Адрес доставки<svg class="chev"><use href="#i-chev"/></svg></button>
          <a href="tel:+74952255431"><svg class="ico"><use href="#i-phone"/></svg>+ 7 (495) 225-54-31</a>
        </nav>
        <div class="week"><div><small>Пн-Ср, <em>сегодня</em></small>10:00 - 22:00</div><div><small>Чт-Вс</small>10:00 - 00:00</div></div>
        <nav class="tools">
          <button class="text-tool"><svg><use href="#i-search"/></svg>Поиск</button>
          <button class="text-tool"><svg><use href="#i-user"/></svg>Профиль</button>
          <button class="menu-btn" aria-label="Меню"><svg><use href="#i-menu"/></svg></button>
          <button class="cart"><svg><use href="#i-basket"/></svg><span><b>3</b> товара</span></button>
        </nav>
      </header>
      <div class="page">
        <nav class="crumbs"><a href="#">Главная</a><svg><use href="#i-chev-r"/></svg><span>Доставка</span></nav>
        <h1 class="title"><a href="#" aria-label="Назад"><svg><use href="#i-back"/></svg></a>Доставка</h1>
        <div class="cols">
          <div class="doc">
            <svg class="map" role="img" aria-label="Карта зон доставки"><use href="#moscow" width="100%" height="100%"/></svg>
            <div class="under">
              <div class="prices"><div class="green"><b>5,000₽</b><span>мин сумма заказа</span></div><div class="amber"><b>8,000₽</b><span>мин сумма заказа</span></div></div>
              <p class="badge"><i></i><span>Доставка работает еще <b>3 часа</b></span></p>
            </div>
            <h2>Бесконтактная доставка</h2>
            <p class="dense">Мы можем доставить ваш заказ бесконтактным способом. Это означает, что мы оставим<br>ваш заказ у двери, и сообщим, что его можно забрать по телефону через смс или<br>звонок. Бесконтактная доставка возможна только при оплате заказа онлайн.</p>
            <p class="dense">Доставка возможна во все районы города Москвы, а также в Московскую область.<br>Ознакомиться со стоимостью и временем доставки в ваш район можно на<br>расположенной ниже карте Москвы и МО.</p>
            <h2>Бесплатная доставка</h2>
            <p>Доставка блюд высочайшего качества без обслуживающего персонала. Идеально для<br>небольших встреч или семейных праздников — просто закажите, и ваши гости будут в<br>восторге.</p>
            <h2>Способы оплаты и заказа доставки</h2>
            <ol>
              <li>Оплата онлайн на сайте или в приложении сервиса доставки BLUEFIN.</li>
              <li>Безналичная оплата курьеру при получении заказа (оплата картой)</li>
              <li>Заказ можно оплатить безналичным способом при получении через терминал</li>
              <li>Оплата наличными при получении заказа</li>
            </ol>
            <p>К оплате принимаются банковские карты Visa, Mastercard, МИР</p>
            <div class="pay"><svg class="pay__visa"><use href="#pay-visa"/></svg><svg class="pay__mir"><use href="#pay-mir"/></svg><svg class="pay__mc"><use href="#pay-mc"/></svg></div>
            <h2>Время доставки</h2>
            <p>Время доставки</p>
            <p>Приготовление и доставка по Москве в пределах МКАД занимает около часа, а по МО —<br>от 1,5 часов. При подтверждении заказа мы сообщим временной интервал доставки.</p>
            <p>При наличии скидочной карты или промокода введите номер карты или промокод в поле<br>ввода при заказе на сайте или в приложении, либо озвучьте данные оператору при<br>заказе по телефону.</p>
            <p>После принятия заказа применение скидок и промокодов при оплате курьеру<br>невозможна.</p>
          </div>
          <aside class="cards">
            <section class="card">
              <h2>Время работы и Контакты</h2>
              <div class="contact"><div><span class="hint"><svg><use href="#i-phone"/></svg>Телефон</span><a class="value" href="tel:+74952255431">+7 (495) 225-54-31</a></div><button class="call-plain" aria-label="Позвонить"><svg><use href="#i-phone"/></svg></button></div>
              <div class="hours"><span class="hint"><svg><use href="#i-clock"/></svg>Время работы</span><span class="value value--lines">ВС–ЧТ с 10:00 до 22:00<br>ПТ–СБ с 10:00 до 00:00</span></div>
            </section>
            <section class="card">
              <h2>Ваш адрес не входит в зону<br>доставки?</h2>
              <p>Позвоните нам и мы найдем решение</p>
              <div class="contact"><div><span class="hint"><svg><use href="#i-phone"/></svg>Телефон</span><a class="value" href="tel:+74952255431">+7 (495) 225-54-31</a></div><button class="call-plain" aria-label="Позвонить"><svg><use href="#i-phone"/></svg></button></div>
            </section>
          </aside>
        </div>
      </div>
      <footer class="foot">
        <a class="logo" href="#" aria-label="Bluefin"><svg viewBox="0 0 94 38"><use href="#fish" color="#555"/><text class="logo__text" x="9" y="36" fill="#2b2b2b">BLUEFIN</text></svg></a>
        <div class="foot__legal"><a href="#">Политика конфиденциальности</a><a href="#">Оферта</a></div>
        <div class="foot__contacts"><a href="mailto:info@bluefin.moscow"><svg><use href="#i-mail"/></svg>info@bluefin.moscow</a><a href="tel:+74952255431"><svg><use href="#i-phone"/></svg>+7 (495) 225-54-31</a></div>
        <span>Работаем с 10:00 до 23:00</span>
        <div class="social"><a href="#"><svg><use href="#i-insta"/></svg>Инстаграм</a><a href="#"><svg><use href="#i-tg"/></svg>Телеграм</a><a href="#"><svg><use href="#i-vk"/></svg>Вконтакте</a></div>
      </footer>
    </article>
  </section>
</main>
</body>
</html>
```
FILE: styles.css
```css
:root {
  --ink: #050505;
  --text: #505553;
  --muted: #8b8f8e;
  --brown: #ac754b;
  --paper: #f5f7f6;
  --foot: #e8e8e6;
}

* { box-sizing: border-box; }

body {
  margin: 0;
  padding: 51px 79px 96px 72px;
  background: #ccc;
  color: var(--ink);
  font-family: Inter, "Noto Sans", sans-serif;
  font-size: 9px;
  line-height: 11px;
}

h1, h2, h3, p, ol { margin: 0; }
a { color: inherit; text-decoration: none; }
button { padding: 0; border: 0; background: none; color: inherit; font: inherit; cursor: pointer; }
svg { display: block; flex: none; }
.sprite { height: 0; width: 0; }

/* Board */
.board {
  display: grid;
  grid-template-columns: 222fr 439fr 854fr 1138fr;
  gap: 119px;
  align-items: start;
}
.device { display: flex; gap: 9px; font-size: 35px; line-height: 36px; font-weight: 400; }
.device__icon { width: 34px; height: 34px; }
.frame-name { margin: 102px 0 15px; color: #666; font-size: 22px; line-height: 26px; }

.frame { background: var(--paper); overflow: hidden; white-space: nowrap; }

/* Header */
.top {
  display: flex;
  align-items: center;
  justify-content: space-between;
  height: 37px;
  padding: 0 18px;
  background: #fff;
}
.logo svg { width: 47px; height: 19px; overflow: visible; }
.logo__text { font: 700 21px Roboto, sans-serif; }
.tools { display: flex; align-items: center; gap: 15px; }
.tool svg { width: 16px; height: 16px; }
.tool--brown { color: var(--brown); }
.tool--brown svg { height: 14px; }
.tool--menu { color: #d08c68; }
.tool--menu svg { width: 15px; height: 13px; }
.menu-btn {
  display: flex;
  align-items: center;
  justify-content: center;
  width: 25px;
  height: 25px;
  border: 1px solid #bf8259;
  border-radius: 5px;
  color: var(--brown);
}
.menu-btn svg { width: 10px; height: 8px; }
.cart {
  display: flex;
  align-items: center;
  gap: 12px;
  width: 96px;
  height: 25px;
  padding: 0 9px;
  border-radius: 5px;
  background: var(--brown);
  color: #fff;
  font-size: 11px;
}
.cart svg { width: 11px; height: 9px; }

/* Text blocks */
.title { display: flex; align-items: center; gap: 5px; font-size: 14px; line-height: 16px; font-weight: 700; }
.title svg { width: 12px; height: 10px; }
.doc { padding: 8px 18px 12px; color: var(--text); }
.doc h1, .doc h2, .doc h3 { color: var(--ink); }
.doc h2 { margin-top: 22px; font-size: 13px; line-height: 16px; font-weight: 700; }
.doc h3 { margin-top: 8px; font-size: 11px; line-height: 14px; font-weight: 600; }
.doc .title + h3 { margin-top: 19px; }
.doc p { margin-top: 10px; }
.doc h2 + p, .doc h3 + p { margin-top: 8px; }
ol { display: flex; flex-direction: column; gap: 3px; margin-top: 8px; padding-left: 14px; }
.pay { display: flex; gap: 9px; margin-top: 9px; }
.pay__visa { width: 41px; height: 14px; }
.pay__mir { width: 46px; height: 14px; }
.pay__mc { width: 22px; height: 14px; }

.contact { display: flex; align-items: center; justify-content: space-between; margin-top: 7px; }
.contact--tight { margin-top: 6px; }
.hours { margin-top: 8px; }
.hint { display: flex; align-items: center; gap: 2px; color: var(--muted); font-size: 8px; line-height: 12px; }
.hint svg { width: 8px; height: 8px; }
.value { display: block; color: var(--ink); font-weight: 500; line-height: 12px; }
.value--lines { padding-top: 1px; line-height: 11px; }
.call {
  display: flex;
  align-items: center;
  gap: 3px;
  height: 20px;
  margin-top: 5px;
  padding: 0 8px;
  border-radius: 6px;
  background: #fff;
  color: #c98062;
  font-size: 8px;
}
.call svg { width: 6px; height: 6px; }
.call-square { display: flex; align-items: center; justify-content: center; width: 22px; height: 22px; border-radius: 5px; background: #fff; color: var(--ink); }
.call-square svg { width: 9px; height: 9px; }

.prices { display: flex; gap: 20px; color: var(--ink); }
.prices--half { display: grid; grid-template-columns: 1fr 1fr; gap: 11px; margin-top: 7px; }
.prices b { display: block; font-size: 11px; line-height: 14px; font-weight: 700; }
.prices span { display: block; font-size: 8px; line-height: 10px; font-weight: 600; }
.map { width: 100%; height: 217px; border-radius: 8px; overflow: hidden; }
.map--zone { height: 194px; margin-top: 9px; }

/* Footer */
.foot { padding: 11px 18px; background: var(--foot); font-weight: 500; }
.foot__contacts { display: flex; gap: 20px; line-height: 12px; }
.foot__contacts a { display: flex; align-items: center; gap: 4px; }
.foot__contacts svg { width: 9px; height: 8px; color: #8f9390; }
.foot__row { display: flex; align-items: center; justify-content: space-between; }
.foot__legal { display: flex; gap: 12px; font-size: 7px; line-height: 10px; }
.foot__row .logo svg { width: 45px; height: 18px; }

/* Mobile */
.frame--mobile .top { height: 43px; padding: 0 14px 0 12px; }
.frame--mobile .doc { padding: 8px 12px 12px; }
.frame--mobile .doc p { margin-top: 9px; }
.frame--mobile .doc h2 + p { margin-top: 8px; }
.frame--mobile .doc h3 + p, .frame--mobile ol { margin-top: 7px; }
.frame--mobile .doc h2 { margin-top: 23px; line-height: 15px; }
.frame--mobile .foot { padding: 11px 12px; }
.frame--mobile .foot__contacts { flex-direction: column; gap: 5px; }
.frame--mobile .foot__row { align-items: flex-end; margin-top: 11px; }
.frame--mobile .foot__legal { flex-direction: column; gap: 3px; }

/* Tablet */
.frame--tablet .tools { gap: 12px; }
.frame--tablet .tool + .tool { margin-left: 4px; }
.frame--tablet .foot__row { margin-top: 8px; }

/* Laptop and desktop */
.frame--wide .top, .frame--wide .foot { padding: 0 29px; }
.frame--wide .tools { gap: 13px; }
.frame--wide .tool svg { width: 12px; height: 12px; }
.frame--wide .cart { width: 95px; }
.where { display: flex; gap: 13px; font-weight: 500; }
.where button, .where a, .text-tool { display: flex; align-items: center; gap: 3px; font-weight: 500; }
.where .ico, .text-tool svg { width: 9px; height: 10px; color: #8f9390; }
.where .chev { width: 8px; height: 5px; }
.week { display: flex; gap: 14px; font-size: 10px; line-height: 11px; font-weight: 500; }
.week small { display: block; font-size: 7px; line-height: 9px; }
.week em { color: #c07f55; font-style: normal; }

.page { padding: 29px 29px; }
.crumbs { display: flex; align-items: center; gap: 4px; font-size: 8px; line-height: 10px; }
.crumbs svg { width: 4px; height: 7px; color: #c2c5c4; }
.crumbs span { color: #bfc2c1; }
.page .title { margin-top: 12px; }
.cols { display: grid; grid-template-columns: 526fr 257fr; gap: 12px; align-items: start; margin-top: 22px; }
.page .doc { padding: 0; font-size: 10px; line-height: 12px; }
.page .doc h2 { margin-top: 17px; font-weight: 600; }
.page .doc p { margin-top: 9px; }
.page .doc h2 + p { margin-top: 11px; }
.page .doc .dense { margin-top: 10px; line-height: 11px; }
.page ol { gap: 0; margin-top: 11px; padding-left: 16px; }
.page .pay { gap: 18px; margin-top: 9px; }
.page .pay__visa { width: 60px; height: 19px; }
.page .pay__mir { width: 68px; height: 19px; }
.page .pay__mc { width: 33px; height: 19px; }
.under { display: flex; align-items: flex-start; justify-content: space-between; margin-top: 9px; }
.under b { font-size: 12px; }
.under .prices span { font-size: 9px; }
.green b { color: #7d9068; }
.amber b { color: #e0a03c; }
.page .doc .badge {
  display: flex;
  align-items: center;
  gap: 3px;
  height: 22px;
  margin-top: 1px;
  padding: 0 7px;
  border-radius: 4px;
  background: var(--foot);
  color: #222;
  font-size: 8px;
}
.badge b { font-size: 8px; font-weight: 600; }
.badge i {
  width: 12px;
  height: 12px;
  border-radius: 50%;
  background: radial-gradient(circle at 60% 60%, #fff 0 1px, #000 2px);
}

.cards { display: grid; gap: 12px; }
.card { padding: 12px; border-radius: 12px; background: #fff; }
.card h2 { font-size: 13px; line-height: 14px; font-weight: 700; }
.card p { margin-top: 5px; color: var(--text); }
.card .contact { margin-top: 11px; padding-right: 6px; }
.card .hours { margin-top: 10px; }
.call-plain svg { width: 10px; height: 10px; }

.frame--wide .foot { display: flex; align-items: center; justify-content: space-between; height: 38px; }
.frame--wide .foot .logo svg { width: 31px; height: 13px; }
.frame--wide .foot__legal { gap: 12px; font-size: 9px; }
.frame--wide .foot__contacts { gap: 13px; }
.social { display: flex; gap: 6px; }
.social a { display: flex; align-items: center; gap: 3px; }
.social svg { width: 14px; height: 14px; }

/* Desktop */
.frame--desktop .top {
  padding: 0 42px;
  box-shadow: 0 16px 24px -4px rgba(0, 0, 0, .09);
}
.frame--desktop .where { gap: 22px; font-size: 11px; }
.frame--desktop .where button, .frame--desktop .where a { gap: 4px; }
.frame--desktop .week { margin-right: 48px; }
.frame--desktop .tools { gap: 19px; }
.text-tool { font-size: 11px; }
.frame--desktop .page { padding: 37px 220px; }
.frame--desktop .cols { grid-template-columns: 463fr 224fr; }
.frame--desktop .foot { height: 36px; padding: 0 42px; }
.frame--desktop .social { gap: 12px; }
.frame--desktop .social svg { width: 10px; height: 10px; }
```
